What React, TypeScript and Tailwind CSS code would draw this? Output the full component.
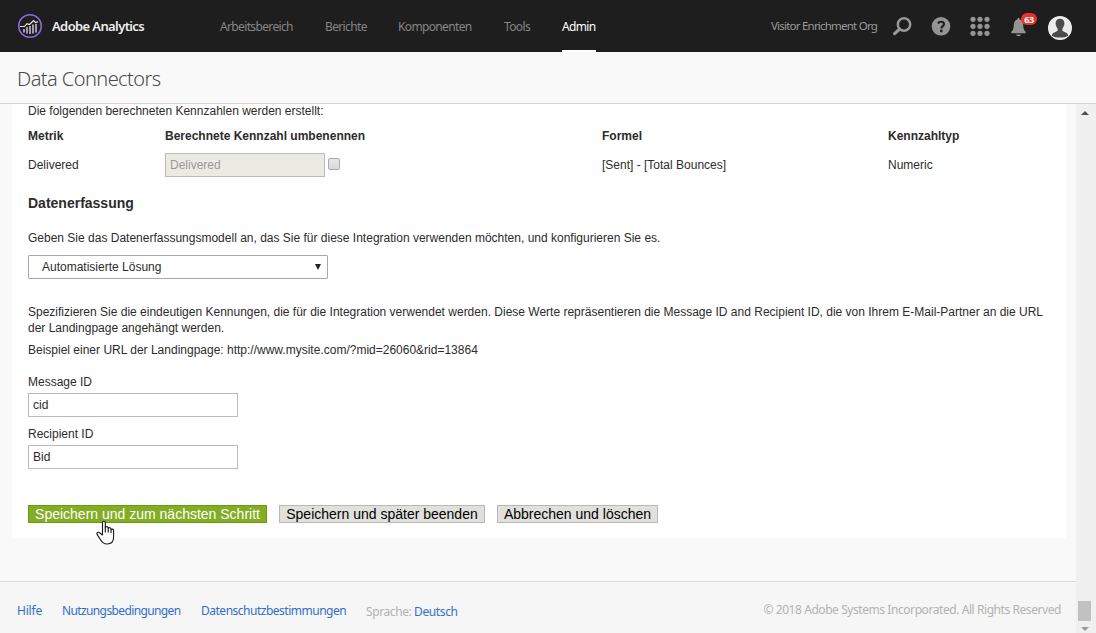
import type { ReactNode } from "react";

function Logo() {
  return (
    <svg width="26" height="26" viewBox="0 0 26 26" fill="none">
      <circle cx="13" cy="13" r="11.3" stroke="#8a6be0" strokeWidth="1.5" />
      <path d="M7 16V19.500M10 14V20.500M13 13V21M16 11.500V20.500M19 11V19.500" stroke="#c3bbd0" strokeWidth="1.600" />
      <path d="M3 13.500h4.500l2.500-2.800 2.500.8 4-4 2 2 2.500-.8" stroke="#e8e4f0" strokeWidth="1.100" />
    </svg>
  );
}

function SearchIcon() {
  return (
    <svg width="20" height="20" viewBox="0 0 20 20" fill="none" stroke="#999">
      <circle cx="12" cy="8.500" r="6.2" strokeWidth="2.500" />
      <path d="M7.400 13.200 2.600 17.600" strokeWidth="3.200" strokeLinecap="round" />
    </svg>
  );
}

function HelpIcon() {
  return (
    <svg width="20" height="20" viewBox="0 0 20 20" fill="none">
      <circle cx="10" cy="10.300" r="9.300" fill="#949494" />
      <path d="M7 7.400C7.600 6.300 8.700 5.800 10 5.800c1.800 0 3 .9 3 2.300 0 1.900-2.600 2.200-2.600 4.300" stroke="#1e1e1e" strokeWidth="2.100" />
      <circle cx="10.300" cy="15" r="1.400" fill="#1e1e1e" />
    </svg>
  );
}

function GridIcon() {
  const dots = [3, 10, 17];
  return (
    <svg width="20" height="20" viewBox="0 0 20 20" fill="#949494">
      {dots.map((y) => dots.map((x) => <circle key={`${x}-${y}`} cx={x} cy={y + 0.3} r="2.600" />))}
    </svg>
  );
}

function BellIcon() {
  return (
    <svg width="16" height="19" viewBox="0 0 16 19" fill="#949494">
      <path d="M7.500 0c.9 0 1.200.7 1.200 1.500C11.400 2.200 12 4.500 12.200 7c.2 4 .9 5.300 2.500 6.800v1.400H.3v-1.400C2 12.300 2.600 11 2.800 7 3 4.500 3.700 2.200 6.300 1.500 6.300.7 6.600 0 7.500 0zM5.200 16.500h4.800c-.3 1.200-1.200 1.700-2.400 1.700s-2.100-.5-2.400-1.700z" />
    </svg>
  );
}

function Avatar() {
  return (
    <svg width="24" height="24" viewBox="0 0 24 24">
      <circle cx="12" cy="12" r="12" fill="#ececec" />
      <path d="M12 2.800c2.800 0 4.400 1.800 4.400 4.500 0 2-.7 3.900-2 5.100v2c0 1.200 5.400 1.500 5.900 5.300-2 1.300-5 1.900-8.300 1.900s-6.300-.6-8.300-1.900c.5-3.800 5.900-4.100 5.900-5.300v-2c-1.300-1.200-2-3.100-2-5.100 0-2.700 1.600-4.500 4.400-4.500z" fill="#4b4b4b" />
    </svg>
  );
}

function HandCursor() {
  return (
    <svg className="absolute left-[68px] top-[15px]" width="19" height="25" viewBox="0 0 19 25">
      <path
        d="M6.500 15V2.700C6.500.7 9.300.7 9.300 2.700v5c0-1.500 2.900-1.400 2.900.2v.6c.2-1.200 2.800-1.100 2.800.4v.8c.3-1 2.600-.8 2.600.7V17c0 4.500-2.600 7-6.600 7-3.700 0-5-1.500-6.600-4.500L1.100 14.400c-1-1.800 1.400-3 2.800-1.400z"
        fill="#fff"
        stroke="#15151f"
        strokeWidth="1.100"
        strokeLinejoin="round"
      />
      <path d="M9.300 7.500v5M12.200 8.500v4M15 9.500v3.500" stroke="#15151f" strokeWidth="1.100" />
    </svg>
  );
}

function NavItem({ width, active, children }: { width: string; active?: boolean; children: ReactNode }) {
  return (
    <a className={`flex h-[52px] items-center whitespace-nowrap border-b-2 pt-[4px] ${width} ${active ? "border-white text-white" : "border-transparent text-[#858585]"}`}>
      {children}
    </a>
  );
}

function Field({ label, value }: { label: string; value: string }) {
  return (
    <label className="flex h-[52px] flex-col">
      <span className="h-[19px] leading-4">{label}</span>
      <input defaultValue={value} className="h-6 w-[210px] border border-[#bbb] bg-white px-1 leading-4 outline-none" />
    </label>
  );
}

export default function App() {
  return (
    <div className="flex h-[633px] w-[1096px] flex-col overflow-hidden bg-[#f9f9f9] font-['Liberation_Sans',Arial,sans-serif] text-xs text-[#2c2c2c]">
      <header className="flex h-[52px] shrink-0 bg-[#1e1e1e] pl-[17px] font-['Noto_Sans',sans-serif] text-[12px] tracking-[-0.64px]">
        <div className="flex w-[203px] items-center gap-[9px]">
          <Logo />
          <span className="whitespace-nowrap pt-px text-[13px] font-semibold tracking-[-0.62px] text-[#ededed]">Adobe Analytics</span>
        </div>
        <nav className="flex w-[551px]">
          <NavItem width="w-[73px] mr-[32px]">Arbeitsbereich</NavItem>
          <NavItem width="w-[42px] mr-[31px]">Berichte</NavItem>
          <NavItem width="w-[74px] mr-[32px]">Komponenten</NavItem>
          <NavItem width="w-[27px] mr-[31px]">Tools</NavItem>
          <NavItem width="w-[34px]" active>Admin</NavItem>
        </nav>
        <span className="w-[121px] whitespace-nowrap pt-[18px] text-[11.5px] tracking-[-0.78px] text-[#999]">Visitor Enrichment Org</span>
        <div className="flex pt-4">
          <span className="w-[39px]"><SearchIcon /></span>
          <span className="w-[39px]"><HelpIcon /></span>
          <span className="w-10"><GridIcon /></span>
          <span className="relative w-[38px] pl-px pt-0.5">
            <BellIcon />
            <span className="absolute left-[11px] top-[-3px] flex h-3 w-4 items-center justify-center rounded-full bg-[#e9322e] text-[9px] font-bold leading-none tracking-[-0.3px] text-white">63</span>
          </span>
          <Avatar />
        </div>
      </header>
      <div className="h-[52px] shrink-0 border-b border-[#d3d3d3] pl-[17px] pt-[12px] font-['Noto_Sans',sans-serif] text-[20px] font-light leading-[30px] tracking-[-0.57px] text-[#4b4b4b]">
        Data Connectors
      </div>
      <div className="flex min-h-0 flex-1">
        <div className="flex min-w-0 flex-1 flex-col">
          <main className="ml-3 flex h-[434px] w-[1054px] shrink-0 flex-col bg-white pl-4">
            <p className="-mt-px h-[25px] leading-4">Die folgenden berechneten Kennzahlen werden erstellt:</p>
            <div className="grid h-[67px] grid-cols-[137px_437px_286px_1fr] grid-rows-[25px_24px] leading-4">
              <b>Metrik</b>
              <b>Berechnete Kennzahl umbenennen</b>
              <b>Formel</b>
              <b>Kennzahltyp</b>
              <span className="pt-1">Delivered</span>
              <span className="flex gap-[3px]">
                <input disabled value="Delivered" className="h-6 w-40 border border-[#bbb] bg-[#ebebe4] px-1 text-[#999]" />
                <span className="mt-[5px] h-3 w-3 rounded-[2px] border border-[#aaa] bg-linear-to-b from-[#e6e6e6] to-[#dadada]" />
              </span>
              <span className="pt-1">[Sent] - [Total Bounces]</span>
              <span className="pt-1">Numeric</span>
            </div>
            <h2 className="h-[35px] text-[14px] font-bold leading-4">Datenerfassung</h2>
            <p className="h-[25px] leading-4">Geben Sie das Datenerfassungsmodell an, das Sie für diese Integration verwenden möchten, und konfigurieren Sie es.</p>
            <div className="flex h-6 w-[300px] items-center justify-between rounded-[1px] border border-[#a9a9a9] pl-[13px] pr-[6px]">
              <span>Automatisierte Lösung</span>
              <svg width="6" height="6" viewBox="0 0 6 6"><path d="M0 0h6L3 6z" fill="#222" /></svg>
            </div>
            <p className="mt-[25px] whitespace-nowrap leading-4">
              Spezifizieren Sie die eindeutigen Kennungen, die für die Integration verwendet werden. Diese Werte repräsentieren die Message ID and Recipient ID, die von Ihrem E-Mail-Partner an die URL
              <br />
              der Landingpage angehängt werden.
            </p>
            <p className="mb-4 mt-1.5 leading-4">Beispiel einer URL der Landingpage: http://www.mysite.com/?mid=26060&amp;rid=13864</p>
            <Field label="Message ID" value="cid" />
            <Field label="Recipient ID" value="Bid" />
            <div className="relative mt-[27px] flex gap-3 whitespace-nowrap text-[14px] leading-4 text-black">
              <button className="h-[18px] w-[239px] border border-[#6c9b0b] bg-[#82ad25] text-white">Speichern und zum nächsten Schritt</button>
              <button className="h-[18px] w-[206px] border border-[#b8b8b8] bg-[#e1e1dc]">Speichern und später beenden</button>
              <button className="h-[18px] w-[161px] border border-[#b8b8b8] bg-[#e1e1dc]">Abbrechen und löschen</button>
              <HandCursor />
            </div>
          </main>
          <footer className="mt-[43px] flex h-[52px] border-t border-[#dadada] bg-[#f6f6f6] pl-[17px] pr-[15px] pt-[19px] font-['Noto_Sans',sans-serif] text-xs leading-5 tracking-[-0.2px] text-[#b3b3b3]">
            <a className="w-[45px] text-[#326ec8]">Hilfe</a>
            <a className="w-[139px] tracking-[-0.62px] text-[#326ec8]">Nutzungsbedingungen</a>
            <a className="w-[165px] tracking-[-0.49px] text-[#326ec8]">Datenschutzbestimmungen</a>
            <span className="whitespace-nowrap pt-px tracking-[-0.4px]">Sprache: <a className="text-[#326ec8]">Deutsch</a></span>
            <span className="ml-auto -mt-px whitespace-nowrap tracking-[-0.43px]">© 2018 Adobe Systems Incorporated. All Rights Reserved</span>
          </footer>
        </div>
        <div className="flex w-5 flex-col items-center justify-between bg-[#f0f0f0] pb-0.5 pr-[3px] pt-[7px]">
          <svg width="8" height="4" viewBox="0 0 8 4"><path d="M0 4h8L4 0z" fill="#505050" /></svg>
          <div className="flex flex-col items-center gap-1.5">
            <div className="h-5 w-[13px] bg-[#c1c1c1]" />
            <svg width="8" height="4" viewBox="0 0 8 4"><path d="M0 0h8L4 4z" fill="#999" /></svg>
          </div>
        </div>
      </div>
    </div>
  );
}
